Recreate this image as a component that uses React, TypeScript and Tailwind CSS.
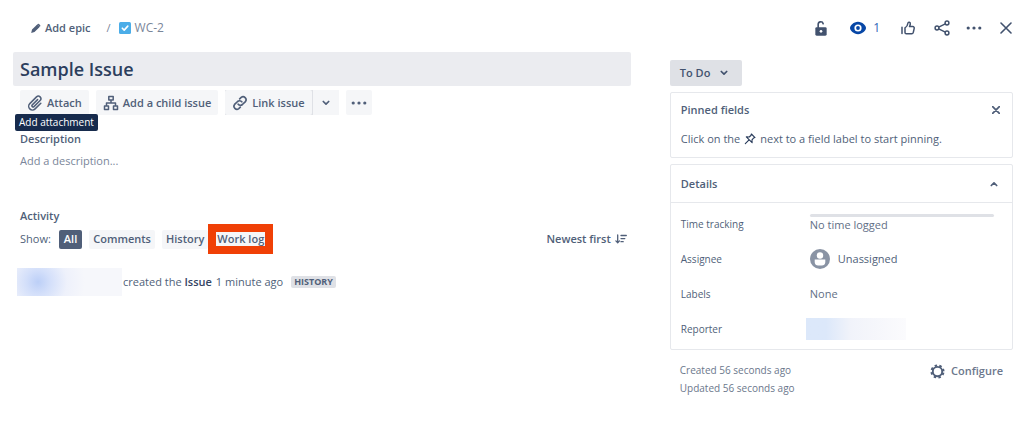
import type { ReactNode } from 'react'

interface IconProps {
  className?: string
}

interface ActionButtonProps {
  icon: ReactNode
  label: string
}

const activityFilters = ['Comments', 'History']

function IconPencil({ className }: IconProps) {
  return (
    <svg viewBox="0 0 12 12" className={className} fill="currentColor" aria-hidden="true">
      <path d="M1.300 10.800 2.200 7.200 7.300 2.100l2.700 2.700-5.100 5.100ZM7.900 1.600l.5-.5a1 1 0 0 1 1.400 0l1.200 1.200a1 1 0 0 1 0 1.400l-.5.5Z" />
      <path d="m7 2.500 1-1 2.600 2.600-1 1Z" />
    </svg>
  )
}

function IconTask({ className }: IconProps) {
  return (
    <svg viewBox="0 0 12 12" className={className} aria-hidden="true">
      <rect width="12" height="12" rx="1.5" fill="#4bade8" />
      <path d="m3.3 6.2 1.9 1.9 3.6-4" fill="none" stroke="#fff" strokeWidth="1.6" strokeLinecap="round" strokeLinejoin="round" />
    </svg>
  )
}

function IconUnlock({ className }: IconProps) {
  return (
    <svg viewBox="0 0 16 18" className={className} aria-hidden="true">
      <path d="M5 8V4.600a2.700 2.700 0 0 1 5.300-.7" fill="none" stroke="currentColor" strokeWidth="1.700" strokeLinecap="round" />
      <rect x="2" y="7.600" width="12" height="9" rx="1.400" fill="currentColor" />
      <circle cx="8" cy="12" r="1.400" fill="#fff" />
    </svg>
  )
}

function IconEye({ className }: IconProps) {
  return (
    <svg viewBox="0 0 18 14" className={className} aria-hidden="true">
      <path d="M9 .8C4.600 .8 1 4.700 1 7s3.600 6.200 8 6.200S17 9.300 17 7 13.400 .8 9 .8Z" fill="#0747a6" />
      <circle cx="9" cy="7" r="3.600" fill="#fff" />
      <circle cx="9" cy="7" r="1.900" fill="#0747a6" />
    </svg>
  )
}

function IconLike({ className }: IconProps) {
  return (
    <svg viewBox="0 0 16 16" className={className} fill="none" stroke="currentColor" strokeWidth="1.5" strokeLinecap="round" strokeLinejoin="round" aria-hidden="true">
      <path d="M2 7.200v6.300M5 7.800c2-1.100 2.700-2.600 3-4.800.2-1.300 2.500-1 2.300.9-.1 1-.4 1.900-.8 2.700h3.300c1 0 1.600.8 1.400 1.700l-.9 4.100c-.2.8-.8 1.300-1.600 1.300H6.300c-.8 0-1.300-.5-1.300-1.300Z" />
    </svg>
  )
}

function IconShare({ className }: IconProps) {
  return (
    <svg viewBox="0 0 16 16" className={className} fill="none" stroke="currentColor" strokeWidth="1.5" aria-hidden="true">
      <circle cx="3" cy="8" r="1.900" />
      <circle cx="13" cy="3" r="1.900" />
      <circle cx="13" cy="13" r="1.900" />
      <path d="m4.700 7.100 6.600-3.300M4.700 8.900l6.600 3.300" />
    </svg>
  )
}

function IconMore({ className }: IconProps) {
  return (
    <svg viewBox="0 0 16 4" className={className} fill="currentColor" aria-hidden="true">
      <circle cx="2.200" cy="2" r="1.600" />
      <circle cx="8" cy="2" r="1.600" />
      <circle cx="13.800" cy="2" r="1.600" />
    </svg>
  )
}

function IconClose({ className }: IconProps) {
  return (
    <svg viewBox="0 0 12 12" className={className} fill="none" stroke="currentColor" strokeLinecap="round" aria-hidden="true">
      <path d="m1 1 10 10M11 1 1 11" />
    </svg>
  )
}

function IconAttach({ className }: IconProps) {
  return (
    <svg viewBox="0 0 16 16" className={className} fill="none" stroke="currentColor" strokeWidth="1.5" strokeLinecap="round" aria-hidden="true">
      <path d="M10.600 4.600 5.300 9.900a1.200 1.200 0 0 0 1.700 1.700l6.100-6.100a2.500 2.500 0 0 0-3.600-3.600L2.800 8.600a3.700 3.700 0 0 0 5.300 5.300l5.700-5.700" />
    </svg>
  )
}

function IconTree({ className }: IconProps) {
  return (
    <svg viewBox="0 0 16 16" className={className} fill="none" stroke="currentColor" strokeWidth="1.500" strokeLinejoin="round" aria-hidden="true">
      <rect x="5.800" y="1.500" width="4.400" height="3.400" />
      <rect x="1.500" y="11" width="4" height="3.400" />
      <rect x="10.500" y="11" width="4" height="3.400" />
      <path d="M8 5v3M3.500 11V8h9v3" />
    </svg>
  )
}

function IconLink({ className }: IconProps) {
  return (
    <svg viewBox="0 0 16 16" className={className} fill="none" stroke="currentColor" strokeWidth="1.700" strokeLinecap="round" aria-hidden="true">
      <path d="M6.200 9.200a2.900 2.900 0 0 0 4.200.3l3-2.900a3 3 0 0 0-4.200-4.200L7.700 3.800" />
      <path d="M9.800 6.800a2.900 2.900 0 0 0-4.200-.3l-3 2.900a3 3 0 0 0 4.200 4.200l1.500-1.400" />
    </svg>
  )
}

function IconChevron({ className }: IconProps) {
  return (
    <svg viewBox="0 0 8 6" className={className} fill="none" stroke="currentColor" strokeWidth="1.700" strokeLinecap="round" strokeLinejoin="round" aria-hidden="true">
      <path d="m1.300 1.500 2.700 2.700 2.700-2.700" />
    </svg>
  )
}

function IconSort({ className }: IconProps) {
  return (
    <svg viewBox="0 0 12 10" className={className} fill="none" stroke="currentColor" strokeWidth="1.300" strokeLinecap="round" strokeLinejoin="round" aria-hidden="true">
      <path d="M2.700 1v7.500M.9 6.900l1.800 1.800 1.800-1.800M6 1.500h5.300M6 4.600h3.800M6 7.700h2.200" />
    </svg>
  )
}

function IconPin({ className }: IconProps) {
  return (
    <svg viewBox="0 0 12 12" className={className} fill="none" stroke="currentColor" strokeWidth="1.100" strokeLinecap="round" strokeLinejoin="round" aria-hidden="true">
      <path d="M7.400 1 11 4.600l-1.500.5-1.500 1.700.1 2.900L2.300 3.900l2.900.1 1.700-1.500ZM4.800 7.200l-3.500 3.500" />
    </svg>
  )
}

function IconPerson({ className }: IconProps) {
  return (
    <svg viewBox="0 0 20 20" className={className} aria-hidden="true">
      <circle cx="10" cy="10" r="10" fill="#8993a4" />
      <circle cx="10" cy="6.500" r="3.200" fill="#fff" />
      <path d="M4.700 10.600h10.600v2.600c0 2-1.600 3.300-3.400 3.300H8.100c-1.800 0-3.400-1.300-3.400-3.300Z" fill="#fff" />
    </svg>
  )
}

function IconGear({ className }: IconProps) {
  return (
    <svg viewBox="0 0 16 16" className={className} fill="none" stroke="currentColor" aria-hidden="true">
      <circle cx="8" cy="8" r="5" strokeWidth="2" />
      <circle cx="8" cy="8" r="6.400" strokeWidth="2.200" strokeDasharray="2.600 2.427" strokeDashoffset="-1.200" />
    </svg>
  )
}

function ActionButton({ icon, label }: ActionButtonProps) {
  return (
    <button type="button" className="flex h-[25px] items-center gap-1 rounded-xs bg-[#f5f6f8] px-[7px] font-semibold">
      {icon}
      {label}
    </button>
  )
}

function Field({ label, children }: { label: string; children: ReactNode }) {
  return (
    <div className="grid h-[35px] grid-cols-[7fr_10fr] items-center">
      <dt className="text-[10px] font-medium">{label}</dt>
      <dd className="text-[#626f86]">{children}</dd>
    </div>
  )
}

export default function App() {
  return (
    <div className="bg-white pr-[11px] pb-9 pl-[13px] font-['Open_Sans','Noto_Sans',sans-serif] text-[11px] leading-4 text-[#505f79]">
      <header className="flex h-[52px] items-center justify-between pt-1 pl-[17px]">
        <nav aria-label="Breadcrumb" className="flex items-center">
          <button type="button" className="flex items-center gap-1 font-semibold">
            <IconPencil className="size-[11px]" />
            Add epic
          </button>
          <span className="pr-2 pl-4 text-[#7a869a]">/</span>
          <a href="#issue" className="flex items-center gap-1 text-xs text-[#7a869a]">
            <IconTask className="size-3" />
            WC-2
          </a>
        </nav>
        <div className="flex items-center pr-px text-[#42526e]">
          <button type="button" aria-label="Restrictions" className="mr-5">
            <IconUnlock className="h-[17px] w-4" />
          </button>
          <button type="button" aria-label="Watchers" className="mr-5 flex items-center gap-1.5 text-xs text-[#2f66b8]">
            <IconEye className="h-[14px] w-[18px]" />
            1
          </button>
          <button type="button" aria-label="Like" className="mr-[18px]">
            <IconLike className="size-4" />
          </button>
          <button type="button" aria-label="Share" className="mr-4">
            <IconShare className="size-4" />
          </button>
          <button type="button" aria-label="Actions" className="mr-[18px]">
            <IconMore className="h-1 w-4" />
          </button>
          <button type="button" aria-label="Close">
            <IconClose className="size-3 stroke-[1.6]" />
          </button>
        </div>
      </header>

      <div className="grid grid-cols-[9fr_5fr] gap-[39px]">
        <main>
          <h1 className="rounded-xs bg-[#ebecf0] px-[7px] py-1 text-[18px] leading-[26px] font-semibold text-[#2c3e5d]">
            Sample Issue
          </h1>

          <div className="mt-1 flex gap-[7px] px-[7px]">
            <div className="relative">
              <ActionButton icon={<IconAttach className="size-4" />} label="Attach" />
              <span
                role="tooltip"
                className="absolute top-6 left-[-5px] rounded-xs bg-[#172b4d] px-1 text-[10px] leading-[17px] font-medium whitespace-nowrap text-white"
              >
                Add attachment
              </span>
            </div>
            <ActionButton icon={<IconTree className="size-4" />} label="Add a child issue" />
            <div className="flex gap-px bg-[#dfe1e6]">
              <ActionButton icon={<IconLink className="size-4" />} label="Link issue" />
              <button type="button" aria-label="More link options" className="flex w-[26px] items-center justify-center bg-[#f5f6f8]">
                <IconChevron className="h-1.5 w-2" />
              </button>
            </div>
            <button type="button" aria-label="More" className="flex w-[26px] items-center justify-center rounded-xs bg-[#f5f6f8]">
              <IconMore className="h-1 w-4" />
            </button>
          </div>

          <section className="mt-4 px-[7px]">
            <h2 className="font-semibold">Description</h2>
            <p className="mt-1.5 text-[#7a869a]">Add a description...</p>
          </section>

          <section className="mt-[39px] pr-1 pl-[7px]">
            <h2 className="font-semibold">Activity</h2>
            <div className="flex h-[30px] items-center">
              <span className="mr-2">Show:</span>
              <button type="button" className="mr-[7px] h-[19px] rounded-xs bg-[#505f79] px-[5px] font-semibold text-white">
                All
              </button>
              <div className="flex gap-[7px]">
                {activityFilters.map((name) => (
                  <button key={name} type="button" className="h-[19px] rounded-xs bg-[#f5f6f8] px-1 font-semibold">
                    {name}
                  </button>
                ))}
              </div>
              <button type="button" className="border-8 border-[#f04006] bg-[#f5f6f8] px-px leading-[14px] font-semibold">
                Work log
              </button>
              <button type="button" className="ml-auto flex items-center gap-1 font-semibold">
                Newest first
                <IconSort className="h-[10px] w-3" />
              </button>
            </div>
            <div className="mt-[14px] -ml-[3px] flex items-center">
              <span className="h-7 w-[105px] bg-[radial-gradient(circle_at_20%_50%,#bccff7_0%,#d3dffa_14%,#eef1fb_34%,#f6f7fb_55%)]" />
              <p className="ml-px">
                created the <span className="font-semibold text-[#344563]">Issue</span>
              </p>
              <time className="ml-1">1 minute ago</time>
              <span className="ml-2 rounded-xs bg-[#dfe1e6] px-[3px] text-[9px] leading-3 font-bold">HISTORY</span>
            </div>
          </section>
        </main>

        <aside>
          <button type="button" className="mt-2 flex h-[26px] items-center gap-2.5 rounded-xs bg-[#dfe1e6] px-2.5 font-semibold text-[#42526e]">
            To Do
            <IconChevron className="mr-1 h-1.5 w-2" />
          </button>

          <section className="mt-1.5 rounded-xs border border-[#e6e8ec] px-2.5 pt-[9px] pb-2.5">
            <div className="flex items-center justify-between">
              <h2 className="font-semibold">Pinned fields</h2>
              <button type="button" aria-label="Dismiss" className="mr-0.5">
                <IconClose className="size-2 stroke-[2.6]" />
              </button>
            </div>
            <p className="mt-[13px] flex items-center gap-1">
              Click on the
              <IconPin className="size-3 text-[#253858]" />
              next to a field label to start pinning.
            </p>
          </section>

          <section className="mt-1.5 rounded-xs border border-[#e6e8ec]">
            <div className="flex h-[38px] items-center justify-between border-b border-[#e6e8ec] px-2.5">
              <h2 className="font-semibold">Details</h2>
              <button type="button" aria-label="Collapse details" className="mr-1">
                <IconChevron className="h-1.5 w-2 rotate-180" />
              </button>
            </div>
            <dl className="pt-[3px] pr-[18px] pb-[3px] pl-2.5">
              <Field label="Time tracking">
                <div className="h-[3px] rounded-xs bg-[#dfe1e6]" />
                No time logged
              </Field>
              <Field label="Assignee">
                <span className="flex items-center gap-2 text-[#505f79]">
                  <IconPerson className="size-5" />
                  Unassigned
                </span>
              </Field>
              <Field label="Labels">None</Field>
              <Field label="Reporter">
                <span className="-ml-1 block h-[22px] w-[100px] bg-linear-to-r from-[#dce8fa] from-20% via-[#f1f3fa] via-45% to-[#fbfbfd]" />
              </Field>
            </dl>
          </section>

          <footer className="flex items-start justify-between px-2.5 pt-[11px] text-[#6b778c]">
            <div className="text-[10px] leading-[18px]">
              <p>Created 56 seconds ago</p>
              <p>Updated 56 seconds ago</p>
            </div>
            <button type="button" className="flex items-center gap-1.5 pt-0.5 font-semibold">
              <IconGear className="size-[15px] text-[#505f79]" />
              Configure
            </button>
          </footer>
        </aside>
      </div>
    </div>
  )
}
